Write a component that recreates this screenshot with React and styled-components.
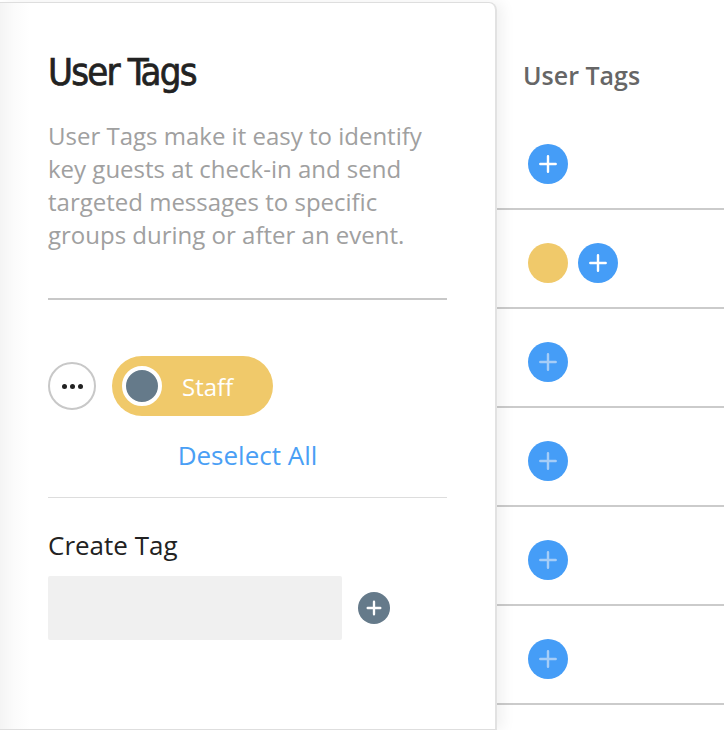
import React from "react";
import styled, { createGlobalStyle } from "styled-components";

const GlobalStyle = createGlobalStyle`
  html, body {
    margin: 0;
    padding: 0;
    background: #ffffff;
  }
  body {
    font-family: "Open Sans", "Liberation Sans", sans-serif;
  }
`;

const Page = styled.div`
  display: flex;
  width: 724px;
  height: 730px;
  overflow: hidden;
  background: #ffffff;
`;

// Left side sheet
const Sheet = styled.aside`
  position: relative;
  z-index: 2;
  flex: 0 0 497px;
  box-sizing: border-box;
  margin-top: 2px;
  padding: 40px 48px 0 48px;
  background: linear-gradient(90deg, #f4f4f4 0px, #fbfbfb 14px, #ffffff 30px);
  border: 1px solid #dedede;
  border-left: none;
  border-right: 2px solid #e2e2e2;
  border-top-right-radius: 8px;
  box-shadow: 6px 0 14px rgba(0, 0, 0, 0.06);
`;

const Title = styled.h1`
  margin: 0;
  font-family: "DejaVu Sans Condensed", "DejaVu Sans", sans-serif;
  font-stretch: condensed;
  font-weight: 400;
  font-size: 38px;
  line-height: 58px;
  letter-spacing: -1.8px;
  -webkit-text-stroke: 0.7px #222222;
  color: #222222;
`;

const Description = styled.p`
  margin: 18px 0 0;
  font-size: 24px;
  line-height: 33px;
  color: #a0a0a0;
`;

const Divider = styled.hr`
  margin: ${(p) => p.$top}px 0 0;
  border: none;
  height: ${(p) => (p.$light ? 1 : 2)}px;
  background: ${(p) => (p.$light ? "#dddddd" : "#c8c8c8")};
`;

const TagRow = styled.div`
  display: flex;
  align-items: center;
  gap: 16px;
  margin-top: 56px;
`;

const MoreButton = styled.button`
  display: flex;
  align-items: center;
  justify-content: center;
  gap: 3px;
  box-sizing: border-box;
  width: 48px;
  height: 48px;
  padding: 0;
  border: 2px solid #c8c8c8;
  border-radius: 50%;
  background: #ffffff;
`;

const Dot = styled.span`
  width: 5px;
  height: 5px;
  border-radius: 50%;
  background: #222222;
`;

const TagPill = styled.div`
  display: flex;
  align-items: center;
  gap: 20px;
  box-sizing: border-box;
  width: 161px;
  height: 60px;
  padding: 0 10px;
  border-radius: 30px;
  background: #f0c96a;
  color: #ffffff;
  font-size: 24px;
`;

const Knob = styled.span`
  box-sizing: border-box;
  width: 40px;
  height: 40px;
  border-radius: 50%;
  border: 4px solid #ffffff;
  background: #657a8a;
`;

const LinkButton = styled.button`
  display: block;
  margin: 21px auto 0;
  padding: 0;
  border: none;
  background: none;
  font-family: "Open Sans", "Liberation Sans", sans-serif;
  font-size: 26px;
  line-height: 36px;
  color: #4a9ff5;
  cursor: pointer;
`;

const Label = styled.div`
  margin-top: 30px;
  font-size: 26px;
  line-height: 34px;
  color: #222222;
`;

const CreateRow = styled.div`
  display: flex;
  align-items: center;
  gap: 16px;
  margin-top: 14px;
`;

const TagInput = styled.input`
  box-sizing: border-box;
  width: 294px;
  height: 64px;
  border: none;
  border-radius: 2px;
  background: #f0f0f0;
  outline: none;
`;

const RoundButton = styled.button`
  display: flex;
  align-items: center;
  justify-content: center;
  width: ${(p) => p.$size}px;
  height: ${(p) => p.$size}px;
  padding: 0;
  border: none;
  border-radius: 50%;
  background: ${(p) => p.$bg};
`;

// Right table column
const Column = styled.section`
  flex: 1;
  min-width: 0;
`;

const ColumnHeader = styled.div`
  box-sizing: border-box;
  height: 111px;
  padding: 56px 0 0 26px;
  font-size: 25px;
  font-weight: 600;
  line-height: 38px;
  color: #666666;
`;

const Row = styled.div`
  display: flex;
  align-items: center;
  gap: 10px;
  height: 40px;
  padding: 33px 0 24px 31px;
  border-bottom: 2px solid #cbcbcb;
`;

const TagDot = styled.span`
  width: 40px;
  height: 40px;
  border-radius: 50%;
  background: ${(p) => p.$color};
`;

const Plus = ({ size, stroke, color }) => (
  <svg width={size} height={size} viewBox="0 0 20 20" fill="none">
    <path
      d="M10 3v14M3 10h14"
      stroke={color}
      strokeWidth={stroke}
      strokeLinecap="round"
    />
  </svg>
);

const rows = [
  { tags: [], faded: false },
  { tags: ["#f0c96a"], faded: false },
  { tags: [], faded: true },
  { tags: [], faded: true },
  { tags: [], faded: true },
  { tags: [], faded: true },
  { tags: [], faded: true },
];

const App = () => {
  return (
    <>
      <GlobalStyle />
      <Page>
        <Sheet>
          <Title>User Tags</Title>
          <Description>
            User Tags make it easy to identify key guests at check-in and send
            targeted messages to specific groups during or after an event.
          </Description>
          <Divider $top={47} />

          <TagRow>
            <MoreButton aria-label="More">
              <Dot />
              <Dot />
              <Dot />
            </MoreButton>
            <TagPill>
              <Knob />
              Staff
            </TagPill>
          </TagRow>

          <LinkButton>Deselect All</LinkButton>
          <Divider $top={24} $light />

          <Label>Create Tag</Label>
          <CreateRow>
            <TagInput />
            <RoundButton $size={32} $bg="#657a8a" aria-label="Add tag">
              <Plus size={18} stroke={2.6} color="#ffffff" />
            </RoundButton>
          </CreateRow>
        </Sheet>

        <Column>
          <ColumnHeader>User Tags</ColumnHeader>
          {rows.map((row, i) => (
            <Row key={i}>
              {row.tags.map((c, j) => (
                <TagDot key={j} $color={c} />
              ))}
              <RoundButton $size={40} $bg="#459df7" aria-label="Add">
                <Plus
                  size={22}
                  stroke={2.2}
                  color={row.faded ? "#a6cdf7" : "#ffffff"}
                />
              </RoundButton>
            </Row>
          ))}
        </Column>
      </Page>
    </>
  );
};

export default App;
